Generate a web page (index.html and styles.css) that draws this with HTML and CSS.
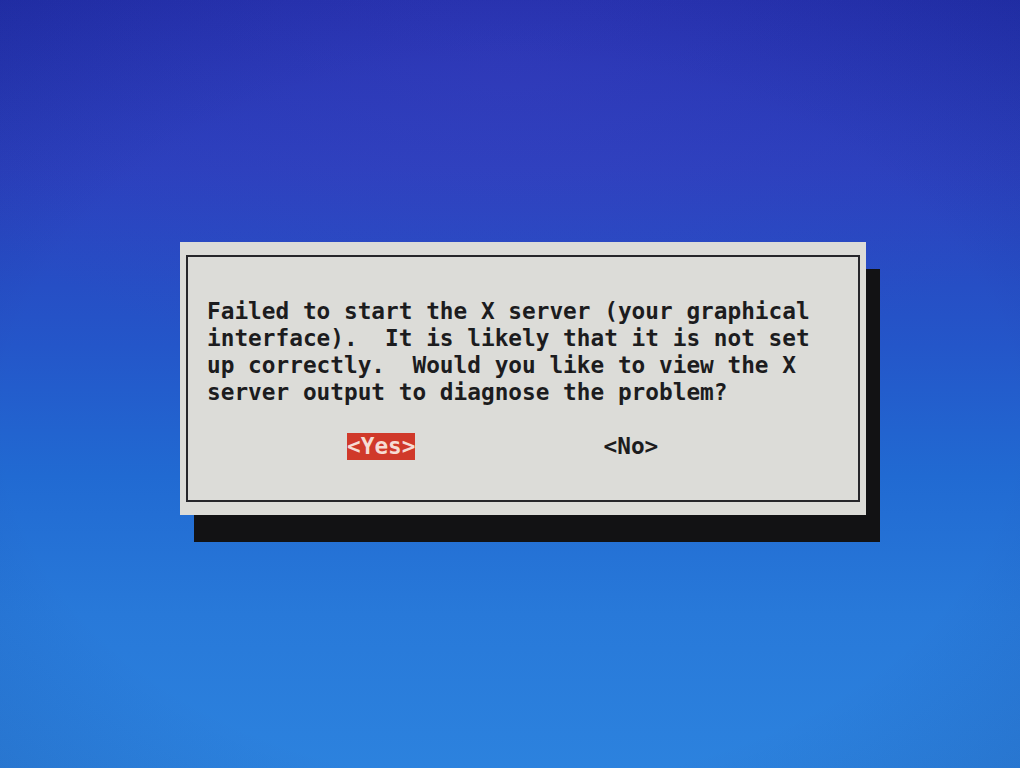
FILE: index.html
```html
<!DOCTYPE html>
<html lang="en">
<head>
<meta charset="utf-8">
<title>X server failure</title>
<link rel="stylesheet" href="styles.css">
</head>
<body>
<div class="screen">
  <div class="dialog">
    <div class="frame">
      <div class="message">
        <div class="line">Failed to start the X server (your graphical</div>
        <div class="line">interface).  It is likely that it is not set</div>
        <div class="line">up correctly.  Would you like to view the X</div>
        <div class="line">server output to diagnose the problem?</div>
      </div>
      <div class="buttons">
        <span class="btn btn-active">&lt;Yes&gt;</span>
        <span class="btn">&lt;No&gt;</span>
      </div>
    </div>
  </div>
</div>
</body>
</html>
```
FILE: styles.css
```css
html, body {
  margin: 0;
  padding: 0;
}

.screen {
  width: 1020px;
  height: 768px;
  box-sizing: border-box;
  padding: 242px 0 0 180px;
  background:
    radial-gradient(ellipse 60% 40% at 50% 10%, rgba(80, 70, 200, 0.22), rgba(80, 70, 200, 0) 100%),
    radial-gradient(ellipse 90% 85% at 50% 55%, rgba(0, 0, 0, 0) 55%, rgba(10, 20, 90, 0.22) 100%),
    linear-gradient(180deg, #2230ae 0%, #2a40bd 22%, #2456c9 45%, #216ad2 62%, #2879d9 80%, #2c82de 100%);
  overflow: hidden;
}

.dialog {
  width: 686px;
  height: 273px;
  box-sizing: border-box;
  padding: 13px 6px;
  background: #dcdcd8;
  box-shadow: 14px 27px 0 0 #121214;
  font-family: "DejaVu Sans Mono", "Liberation Mono", monospace;
  font-size: 22.75px;
  font-weight: bold;
  color: #1c1c1e;
}

.frame {
  height: 100%;
  box-sizing: border-box;
  border: 2px solid #26262a;
  padding: 41px 0 0 19px;
}

.message {
  display: flex;
  flex-direction: column;
}

.line {
  height: 27px;
  line-height: 27px;
  white-space: pre;
}

.buttons {
  display: flex;
  margin-top: 27px;
  padding-left: 140px;
  gap: 188px;
  height: 27px;
  line-height: 27px;
}

.btn {
  white-space: pre;
  padding: 0 0 1px 0;
}

.btn-active {
  background: #d0392a;
  color: #f6dcd4;
}
```
